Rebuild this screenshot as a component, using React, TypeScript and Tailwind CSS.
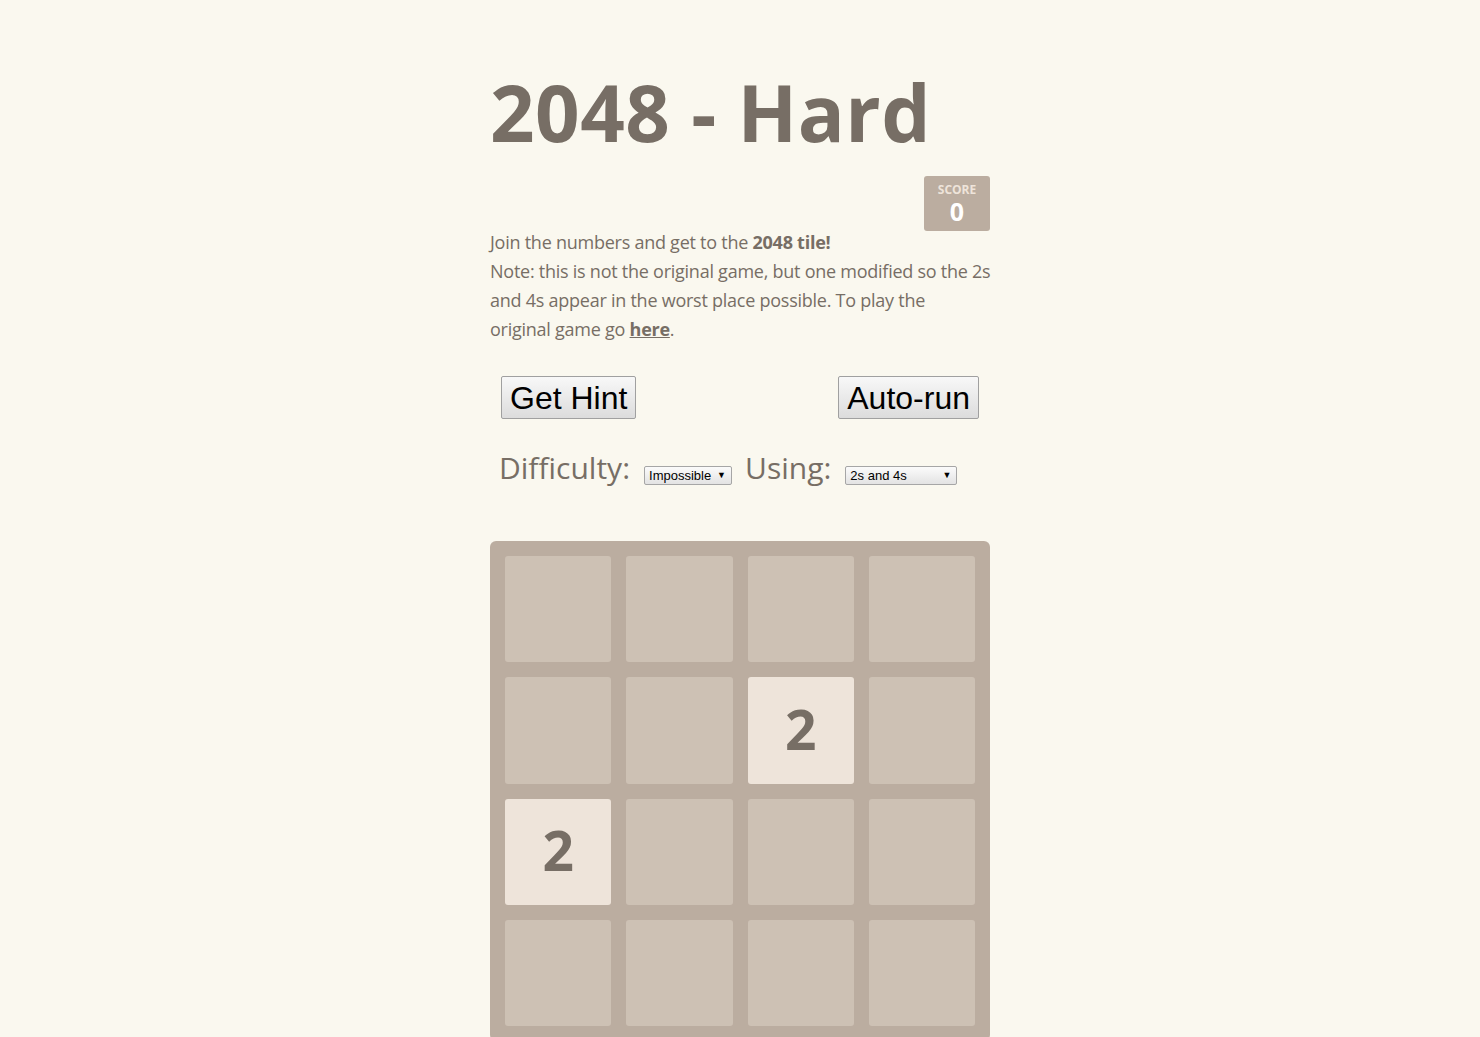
import React from "react";

const board: (number | null)[][] = [
  [null, null, null, null],
  [null, null, 2, null],
  [2, null, null, null],
  [null, null, null, null],
];

function Select({ label, width }: { label: string; width: string }) {
  return (
    <span
      className={`inline-flex h-[19px] items-center justify-between rounded-[2px] border border-[#a6a6a6] bg-gradient-to-b from-[#fbfbfb] to-[#e3e3e3] pl-[4px] pr-[5px] text-[13px] leading-none text-black ${width}`}
      style={{ fontFamily: '"Liberation Sans", Arial, sans-serif' }}
    >
      <span>{label}</span>
      <span className="text-[9px]">▼</span>
    </span>
  );
}

function Button({ children }: { children: React.ReactNode }) {
  return (
    <button
      className="h-[43px] rounded-[2px] border border-[#a0a0a0] bg-gradient-to-b from-[#f8f8f8] to-[#dcdcdc] px-[8px] text-[32px] leading-none text-black"
      style={{ fontFamily: '"Liberation Sans", Arial, sans-serif' }}
    >
      {children}
    </button>
  );
}

export default function App() {
  return (
    <div
      className="min-h-[1037px] bg-[#faf8ef] text-[#776e65]"
      style={{ fontFamily: '"Open Sans", "Noto Sans", sans-serif' }}
    >
      <div className="mx-auto w-[500px] pt-[62px]">
        <h1 className="text-[78px] font-bold leading-[100px] tracking-[0.5px]">2048 - Hard</h1>

        <div className="mt-[14px] flex justify-end">
          <div className="flex h-[55px] w-[66px] flex-col items-center rounded-[3px] bg-[#bbada0] pt-[7px]">
            <span className="text-[12px] font-bold leading-[14px] text-[#eee4da]">SCORE</span>
            <span className="text-[25px] font-bold leading-[28px] text-white">0</span>
          </div>
        </div>

        <p className="-mt-[3px] whitespace-nowrap text-[18px] leading-[29px] tracking-[-0.25px]">
          Join the numbers and get to the <strong>2048 tile!</strong>
          <br />
          Note: this is not the original game, but one modified so the 2s
          <br />
          and 4s appear in the worst place possible. To play the
          <br />
          original game go <a className="font-bold underline">here</a>.
        </p>

        <div className="mt-[32px] flex justify-between px-[11px]">
          <Button>Get Hint</Button>
          <Button>Auto-run</Button>
        </div>

        <div className="mt-[28px] flex items-center pl-[9px] text-[30px] leading-[40px]">
          <span>Difficulty:</span>
          <span className="ml-[14px] mt-[2px]">
            <Select label="Impossible" width="w-[88px]" />
          </span>
          <span className="ml-[13px]">Using:</span>
          <span className="ml-[14px] mt-[2px]">
            <Select label="2s and 4s" width="w-[112px]" />
          </span>
        </div>

        <div className="mt-[52px] grid h-[500px] grid-cols-4 grid-rows-4 gap-[15px] rounded-[6px] bg-[#bbada0] p-[15px]">
          {board.flat().map((v, i) => (
            <div
              key={i}
              className={`flex items-center justify-center rounded-[3px] ${
                v ? "bg-[#eee4da]" : "bg-[#cdc1b4]"
              }`}
            >
              {v && <span className="pb-[4px] text-[55px] font-bold leading-none">{v}</span>}
            </div>
          ))}
        </div>
      </div>
    </div>
  );
}
